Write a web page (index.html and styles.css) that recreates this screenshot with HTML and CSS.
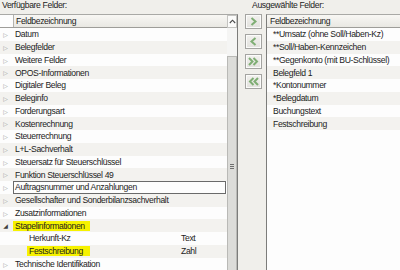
FILE: index.html
```html
<!DOCTYPE html>
<html lang="de">
<head>
  <meta charset="UTF-8" />
  <title>Felder auswählen</title>
  <link rel="stylesheet" href="styles.css">
</head>
<body>
  <div class="dialog">
    <section class="pane">
      <div class="caption">Verfügbare Felder:</div>
      <div class="listbox listbox-left">
        <div class="list-body">
          <div class="head"><span class="head-cell">Feldbezeichnung</span></div>
          <div class="row"><span class="exp"></span><span class="name">Datum</span></div>
          <div class="row"><span class="exp"></span><span class="name">Belegfelder</span></div>
          <div class="row"><span class="exp"></span><span class="name">Weitere Felder</span></div>
          <div class="row"><span class="exp"></span><span class="name">OPOS-Informationen</span></div>
          <div class="row"><span class="exp"></span><span class="name">Digitaler Beleg</span></div>
          <div class="row"><span class="exp"></span><span class="name">Beleginfo</span></div>
          <div class="row"><span class="exp"></span><span class="name">Forderungsart</span></div>
          <div class="row"><span class="exp"></span><span class="name">Kostenrechnung</span></div>
          <div class="row"><span class="exp"></span><span class="name">Steuerrechnung</span></div>
          <div class="row"><span class="exp"></span><span class="name">L+L-Sachverhalt</span></div>
          <div class="row"><span class="exp"></span><span class="name">Steuersatz für Steuerschlüssel</span></div>
          <div class="row"><span class="exp"></span><span class="name">Funktion Steuerschlüssel 49</span></div>
          <div class="row focused"><span class="exp"></span><span class="name">Auftragsnummer und Anzahlungen</span></div>
          <div class="row"><span class="exp"></span><span class="name">Gesellschafter und Sonderbilanzsachverhalt</span></div>
          <div class="row"><span class="exp"></span><span class="name">Zusatzinformationen</span></div>
          <div class="row"><span class="exp open"></span><span class="name mark mark-group">Stapelinformationen</span></div>
          <div class="row child"><span class="name">Herkunft-Kz</span><span class="type">Text</span></div>
          <div class="row child"><span class="name mark mark-child">Festschreibung</span><span class="type">Zahl</span></div>
          <div class="row"><span class="exp"></span><span class="name">Technische Identifikation</span></div>
        </div>
        <div class="scrollbar">
          <div class="sb-up">
            <svg width="7" height="5" viewBox="0 0 7 5"><polyline points="0.8,4 3.5,1.2 6.2,4" fill="none" stroke="#4a4a4a" stroke-width="1.1"/></svg>
          </div>
          <div class="sb-track"></div>
          <div class="sb-thumb"><span class="grip"></span></div>
        </div>
      </div>
    </section>

    <div class="movers">
      <button class="mover">
        <svg width="9" height="9" viewBox="0 0 9 9"><polyline points="2.5,1 6.5,4.5 2.5,8" fill="none" stroke="#7fae74" stroke-width="2"/></svg>
      </button>
      <button class="mover">
        <svg width="9" height="9" viewBox="0 0 9 9"><polyline points="6.5,1 2.5,4.5 6.5,8" fill="none" stroke="#7fae74" stroke-width="2"/></svg>
      </button>
      <button class="mover">
        <svg width="11" height="9" viewBox="0 0 11 9"><polyline points="1,1 4.5,4.5 1,8" fill="none" stroke="#7fae74" stroke-width="2"/><polyline points="5.5,1 9,4.5 5.5,8" fill="none" stroke="#7fae74" stroke-width="2"/></svg>
      </button>
      <button class="mover">
        <svg width="11" height="9" viewBox="0 0 11 9"><polyline points="5.5,1 2,4.5 5.5,8" fill="none" stroke="#7fae74" stroke-width="2"/><polyline points="10,1 6.5,4.5 10,8" fill="none" stroke="#7fae74" stroke-width="2"/></svg>
      </button>
    </div>

    <section class="pane">
      <div class="caption">Ausgewählte Felder:</div>
      <div class="listbox listbox-right">
        <div class="head"><span class="head-cell">Feldbezeichnung</span></div>
        <div class="row"><span class="name">**Umsatz (ohne Soll/Haben-Kz)</span></div>
        <div class="row"><span class="name">**Soll/Haben-Kennzeichen</span></div>
        <div class="row"><span class="name">**Gegenkonto (mit BU-Schlüssel)</span></div>
        <div class="row"><span class="name">Belegfeld 1</span></div>
        <div class="row"><span class="name">*Kontonummer</span></div>
        <div class="row"><span class="name">*Belegdatum</span></div>
        <div class="row"><span class="name">Buchungstext</span></div>
        <div class="row"><span class="name">Festschreibung</span></div>
      </div>
    </section>
  </div>
</body>
</html>
```

FILE: styles.css
```css
body {
  margin: 0;
  background-color: #f0efeb;
  font-family: "Liberation Sans", Arial, sans-serif;
  font-size: 8.6px;
  letter-spacing: -0.35px;
  color: #1c1c1c;
  overflow: hidden;
}
.dialog {
  display: grid;
  grid-template-columns: 238px 28px 134px;
  height: 270px;
  overflow: hidden;
}
.pane {
  display: flex;
  flex-direction: column;
  min-width: 0;
}
.caption {
  height: 14px;
  line-height: 10px;
  padding-left: 2px;
  white-space: nowrap;
}
.pane:last-child .caption {
  margin-left: -16px;
}
.listbox {
  flex: 1;
  background-color: #fdfdfd;
  border-top: 1px solid #a9a9a6;
  overflow: hidden;
}
.listbox-left {
  display: flex;
  border-right: 1px solid #7c7c7a;
}
.listbox-right {
  border-left: 1px solid #7c7c7a;
}
.list-body {
  flex: 1;
  min-width: 0;
}
.head {
  display: flex;
  height: 12px;
  border-bottom: 1px solid #9e9d99;
}
.head-cell {
  flex: 1;
  padding-left: 2px;
  line-height: 12px;
  white-space: nowrap;
  background: linear-gradient(#f8f7f4, #e9e8e3);
}
.listbox-left .head {
  padding-left: 13px;
  background-color: #fdfdfd;
}
.listbox-left .head-cell {
  border-left: 1px solid #b4b3af;
}
.listbox-right .head-cell {
  padding-left: 3px;
}
.row {
  display: flex;
  align-items: center;
  height: 12.75px;
  white-space: nowrap;
  box-sizing: border-box;
}
.row:nth-of-type(odd) {
  background-color: #f3f2ef;
}
.listbox-right .row {
  padding-left: 4px;
}
.exp {
  width: 13px;
  flex: none;
  text-align: center;
  padding-right: 2px;
  box-sizing: border-box;
  line-height: 1;
  letter-spacing: 0;
}
.exp::before {
  content: "\25B7";
  font-family: "DejaVu Sans", sans-serif;
  font-size: 6px;
  color: #9c9c9c;
}
.exp.open::before {
  content: "\25E2";
  color: #3f3f3f;
}
.name {
  padding-left: 2px;
}
.focused .name {
  flex: 1;
  margin-right: 1px;
  border: 1px solid #6a6a6a;
  padding-left: 1px;
  line-height: 10.75px;
}
.mark {
  background-color: #f6f200;
  line-height: 10px;
  box-sizing: border-box;
}
.mark-group {
  width: 77px;
}
.child {
  padding-left: 27px;
}
.mark-child {
  width: 63px;
}
.type {
  margin-left: auto;
  width: 46px;
}
.scrollbar {
  width: 10px;
  display: flex;
  flex-direction: column;
  background-color: #f5f5f4;
}
.sb-up {
  height: 13px;
  box-sizing: border-box;
  border: 1px solid #c4c4c1;
  background-color: #fbfbfa;
  display: flex;
  align-items: center;
  justify-content: center;
}
.sb-track {
  height: 28px;
}
.sb-thumb {
  height: 230px;
  box-sizing: border-box;
  border: 1px solid #b9b9b6;
  background-color: #dcdcd9;
  padding-top: 107px;
}
.grip {
  display: block;
  width: 4px;
  height: 5px;
  margin: 0 auto;
  background: repeating-linear-gradient(#6f6f6f 0 1px, transparent 1px 2px);
}
.movers {
  display: flex;
  flex-direction: column;
  align-items: flex-start;
  gap: 5px;
  padding: 14px 0 0 7px;
}
.mover {
  width: 17px;
  height: 15px;
  padding: 0;
  border: 1px solid #a4a4a1;
  background: linear-gradient(#f2f1ee, #e2e1dd);
  box-shadow: inset 0 0 0 1px #fbfbfa;
  display: flex;
  align-items: center;
  justify-content: center;
}
```
